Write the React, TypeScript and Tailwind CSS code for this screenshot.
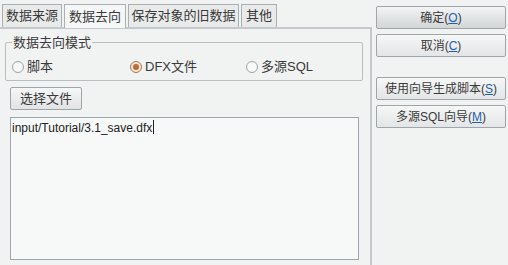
import React from "react";

const font = "font-['Liberation_Sans','Noto_Sans_CJK_SC',sans-serif]";

function Acc({ label, k }: { label: string; k: string }) {
  return (
    <span>
      {label}(<span className="text-[#1d5fb0] underline">{k}</span>)
    </span>
  );
}

function SideButton({ children, tall }: { children: React.ReactNode; tall?: boolean }) {
  return (
    <button
      className={`h-[23px] w-[130px] rounded-[2px] border border-[#9ea6ab] text-[12px] text-[#3a3a3a] ${
        tall
          ? "bg-gradient-to-b from-[#f3f4f4] via-[#e2e4e5] to-[#d3d6d7]"
          : "bg-gradient-to-b from-[#f6f7f7] to-[#e3e5e6]"
      }`}
    >
      {children}
    </button>
  );
}

function Radio({ label, checked }: { label: string; checked?: boolean }) {
  return (
    <label className="flex items-center gap-[3px]">
      <span
        className={`flex h-[12px] w-[12px] items-center justify-center rounded-full border ${
          checked ? "border-[#a77b56] bg-[#f4e4d4]" : "border-[#9aa3a8] bg-[#f7f8f8]"
        }`}
      >
        {checked && <span className="h-[6px] w-[6px] rounded-full bg-[#b86e38]" />}
      </span>
      <span>{label}</span>
    </label>
  );
}

const tabs = [
  { label: "数据来源", w: "w-[60px]" },
  { label: "数据去向", w: "w-[62px]" },
  { label: "保存对象的旧数据", w: "w-[111px]" },
  { label: "其他", w: "w-[36px]" },
];

export default function App() {
  return (
    <div className={`flex h-[265px] w-[508px] overflow-hidden bg-[#f1f2f2] text-[12px] text-[#3a3a3a] ${font}`}>
      {/* left: tabbed panel */}
      <div className="flex w-[372px] flex-col">
        <div className="flex gap-[2px] pl-[2px] pt-[4px]">
          {tabs.map((t, i) => (
            <div
              key={t.label}
              className={`relative flex h-[23px] items-center justify-center border border-b-0 border-[#a8b0b4] text-[13px] ${t.w} ${
                i === 1 ? "z-10 -mb-[1px] h-[24px] bg-[#f5f6f6]" : "bg-[#e9ebeb]"
              }`}
            >
              {t.label}
            </div>
          ))}
        </div>
        <div className="flex-1 border-r-[2px] border-t-[2px] border-[#c3c9cc] pl-[5px] pr-[7px] pt-[7px]">
          <fieldset className="h-[45px] rounded-[2px] border border-[#b8bfc3] px-[6px]">
            <legend className="px-[1px] text-[13px] leading-[13px]">数据去向模式</legend>
            <div className="mt-[8px] flex text-[13px]">
              <div className="w-[118px]">
                <Radio label="脚本" />
              </div>
              <div className="w-[116px]">
                <Radio label="DFX文件" checked />
              </div>
              <Radio label="多源SQL" />
            </div>
          </fieldset>
          <div className="pl-[5px] pt-[6px]">
            <button className="h-[23px] w-[72px] rounded-[2px] border border-[#9ea6ab] bg-gradient-to-b from-[#f6f7f7] to-[#e1e3e4] text-[13px]">
              选择文件
            </button>
            <div className="mt-[7px] h-[143px] w-[349px] border border-[#9ba6ad] bg-[#f7f9f9] px-[1px] text-[12px] leading-[16px] text-[#222]">
              input/Tutorial/3.1_save.dfx
              <span className="ml-[1px] inline-block h-[14px] w-[1px] translate-y-[2px] bg-[#222]" />
            </div>
          </div>
        </div>
      </div>

      {/* right: action buttons */}
      <div className="flex flex-col pl-[4px] pt-[6px]">
        <SideButton tall>
          <Acc label="确定" k="O" />
        </SideButton>
        <div className="mt-[5px]">
          <SideButton>
            <Acc label="取消" k="C" />
          </SideButton>
        </div>
        <div className="mt-[20px]">
          <SideButton>
            <Acc label="使用向导生成脚本" k="S" />
          </SideButton>
        </div>
        <div className="mt-[5px]">
          <SideButton>
            <Acc label="多源SQL向导" k="M" />
          </SideButton>
        </div>
      </div>
    </div>
  );
}
